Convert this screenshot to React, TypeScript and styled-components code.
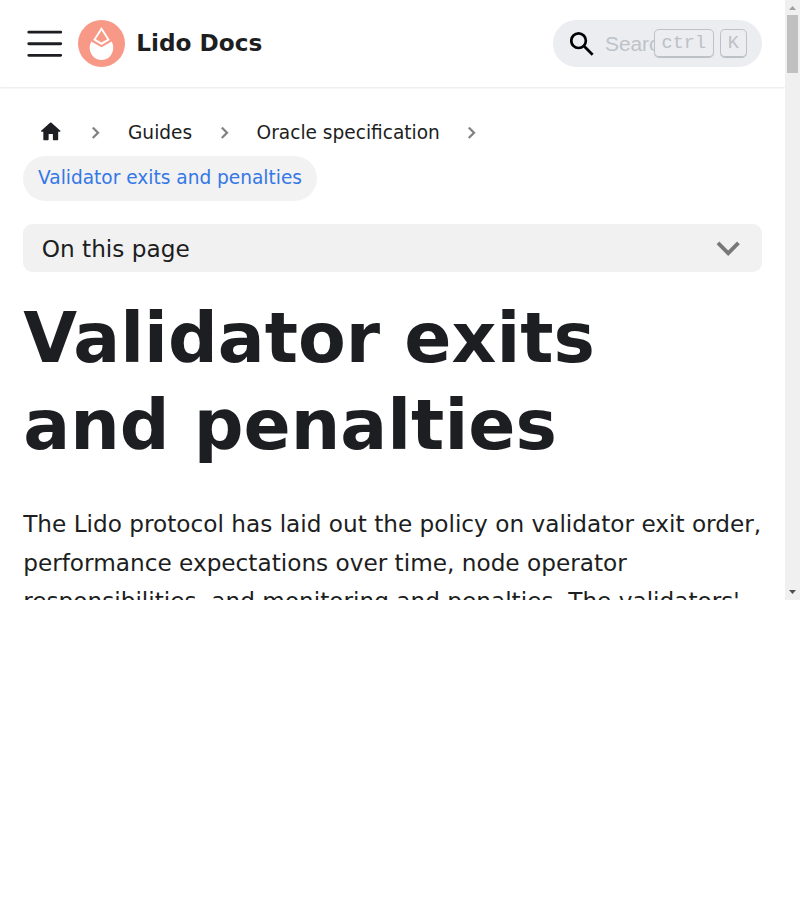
import React from "react";
import styled, { createGlobalStyle } from "styled-components";

const GlobalStyle = createGlobalStyle`
  html { font-size: 23.2px; background: #fff; }
  body { margin: 0; }
  * { box-sizing: border-box; }
`;

const Viewport = styled.div`
  display: flex;
  width: 800px;
  height: 600px;
  overflow: hidden;
  color: #1c1e21;
  font-family: "DejaVu Sans", sans-serif;
  font-size: 1rem;
  line-height: 1.65;
`;

const Page = styled.div`
  width: 785px;
  height: 600px;
  overflow: hidden;
`;

const Navbar = styled.nav`
  display: flex;
  align-items: center;
  height: 3.75rem;
  padding: 0 1rem;
  background: #fff;
  box-shadow: 0 1px 2px 0 rgba(0, 0, 0, 0.1);
`;

const MenuButton = styled.button`
  display: flex;
  width: 43.5px;
  margin: 0 11.3px 0 -0.2px;
  padding: 0;
  border: 0;
  background: none;
  color: inherit;
`;

const Brand = styled.a`
  display: flex;
  align-items: center;
  gap: 11.4px;
  flex: 1;
  font-weight: 700;
  white-space: nowrap;
`;

const BrandName = styled.span`
  margin-top: -1px;
`;

const SearchBox = styled.div`
  position: relative;
  display: flex;
  align-items: center;
  width: 9rem;
  height: 47px;
  padding: 0 15px 0 17px;
  border-radius: 2rem;
  background: #ebedf0;
`;

const Placeholder = styled.span`
  width: 50px;
  margin: 2px 0 0 11px;
  overflow: hidden;
  color: #bec3c9;
  font: 0.9rem/2rem "Liberation Sans", sans-serif;
  white-space: nowrap;
`;

const Keys = styled.div`
  display: flex;
  gap: 6px;
  margin: -1px 0 0 -1px;
`;

const Key = styled.kbd<{ $width: number }>`
  width: ${(p) => p.$width}px;
  height: 29px;
  border: 1px solid #bbc1c7;
  border-radius: 4.7px;
  box-shadow: inset 0 -1px 0 #bbc1c7;
  color: #bbc1c7;
  font: 18.56px/27px "Liberation Mono", monospace;
  text-align: center;
`;

const Main = styled.main`
  padding: 1rem 1rem 0;
`;

const Crumbs = styled.ul`
  display: flex;
  flex-wrap: wrap;
  margin: 0 0 22.9px;
  padding: 0;
  list-style: none;
  font-size: 0.8rem;
`;

const Crumb = styled.li`
  display: flex;
  align-items: center;
  height: 45.45px;
`;

const CrumbLink = styled.a<{ $active?: boolean }>`
  display: flex;
  align-items: center;
  height: 45.45px;
  padding: 0 0.64rem ${(p) => (p.$active ? 1 : 0)}px;
  border-radius: 1.5rem;
  background: ${(p) => (p.$active ? "#f2f2f2" : "transparent")};
  color: ${(p) => (p.$active ? "#3578e5" : "inherit")};
`;

const HomeIcon = styled.svg`
  width: 25.5px;
  height: 25.5px;
  margin-bottom: 2px;
`;

const Separator = styled.svg`
  width: 0.5rem;
  height: 0.5rem;
  margin: 0 0.5rem;
  opacity: 0.5;
`;

const Toc = styled.button`
  display: flex;
  align-items: center;
  justify-content: space-between;
  width: 100%;
  height: 48px;
  padding: 1px 10px 0 0.8rem;
  border: 0;
  border-radius: 0.4rem;
  background: #f1f1f1;
  color: inherit;
  font: inherit;
`;

const TocLabel = styled.span`
  padding-top: 2px;
`;

const Title = styled.h1`
  margin: 23.2px 0 36.2px;
  font-size: 3rem;
  font-weight: 700;
  line-height: 1.25;
`;

const Text = styled.p`
  margin: 0;
`;

const Scrollbar = styled.div`
  display: flex;
  flex-direction: column;
  align-items: center;
  justify-content: space-between;
  width: 15px;
  height: 600px;
  background: #f0f0f0;
`;

const Thumb = styled.div`
  width: 11px;
  height: 58px;
  margin-bottom: auto;
  background: #c0c0c0;
`;

const Arrow = styled.svg`
  display: block;
  width: 15px;
  height: 15px;
`;

function Chevron() {
  return (
    <Separator viewBox="0 0 256 256">
      <path
        d="M79.093 0 48.907 30.187 146.72 128 48.907 225.813 79.093 256 207.093 128z"
        stroke="#000"
        strokeWidth="8"
      />
    </Separator>
  );
}

export default function App() {
  return (
    <>
      <GlobalStyle />
      <Viewport>
        <Page>
          <Navbar>
            <MenuButton aria-label="Toggle navigation bar">
              <svg width="43.5" height="43.5" viewBox="0 0 30 30">
                <path d="M4 7h22M4 15h22M4 23h22" stroke="currentColor" strokeLinecap="round" strokeWidth="2" />
              </svg>
            </MenuButton>
            <Brand>
              <svg width="47" height="47" viewBox="0 0 47 47">
                <circle cx="23.5" cy="23.5" r="23.5" fill="#f89987" />
                <path d="M13.3 21.5C10.9 26 11.2 32.2 14.9 36.2c4.7 5.1 12.5 5.1 17.2 0 3.7-4 4-10.2 1.6-14.7L23.5 27.3z" fill="#fff" />
                <path d="M23.5 7 31.8 20.1 23.5 24.9 15.2 20.1z M23.5 10.4 17.8 19.3 23.5 22.6 29.2 19.3z" fill="#fff" fillRule="evenodd" />
              </svg>
              <BrandName>Lido Docs</BrandName>
            </Brand>
            <SearchBox>
              <svg width="24" height="24" viewBox="0 0 24 24" fill="none" stroke="#000">
                <circle cx="8.6" cy="8.7" r="7.3" strokeWidth="2.7" />
                <path d="m13.7 13.8 9 9" strokeWidth="2.7" />
              </svg>
              <Placeholder>Search</Placeholder>
              <Keys>
                <Key $width={60}>ctrl</Key>
                <Key $width={27}>K</Key>
              </Keys>
            </SearchBox>
          </Navbar>
          <Main>
            <Crumbs>
              <Crumb>
                <CrumbLink aria-label="Home page">
                  <HomeIcon viewBox="0 0 24 24">
                    <path
                      d="M10 19v-5h4v5c0 .55.45 1 1 1h3c.55 0 1-.45 1-1v-7h1.7c.46 0 .68-.57.33-.87L12.67 3.6c-.38-.34-.96-.34-1.34 0l-8.36 7.53c-.34.3-.13.87.33.87H5v7c0 .55.45 1 1 1h3c.55 0 1-.45 1-1z"
                      fill="currentColor"
                    />
                  </HomeIcon>
                </CrumbLink>
                <Chevron />
              </Crumb>
              <Crumb>
                <CrumbLink>Guides</CrumbLink>
                <Chevron />
              </Crumb>
              <Crumb>
                <CrumbLink>Oracle specification</CrumbLink>
                <Chevron />
              </Crumb>
              <Crumb>
                <CrumbLink $active>Validator exits and penalties</CrumbLink>
              </Crumb>
            </Crumbs>
            <Toc>
              <TocLabel>On this page</TocLabel>
              <svg width="46.4" height="46.4" viewBox="0 0 24 24">
                <path d="M7.41 15.41 12 10.83l4.59 4.58L18 14l-6-6-6 6z" fill="#000" opacity="0.5" transform="rotate(180 12 12)" />
              </svg>
            </Toc>
            <Title>Validator exits and penalties</Title>
            <Text>
              The Lido protocol has laid out the policy on validator exit order, performance expectations over time,
              node operator responsibilities, and monitoring and penalties. The validators'
            </Text>
          </Main>
        </Page>
        <Scrollbar>
          <Arrow viewBox="0 0 15 15">
            <path d="M4 10h7L7.5 6z" fill="#a0a0a0" />
          </Arrow>
          <Thumb />
          <Arrow viewBox="0 0 15 15">
            <path d="M4 5h7L7.5 9z" fill="#505050" />
          </Arrow>
        </Scrollbar>
      </Viewport>
    </>
  );
}
